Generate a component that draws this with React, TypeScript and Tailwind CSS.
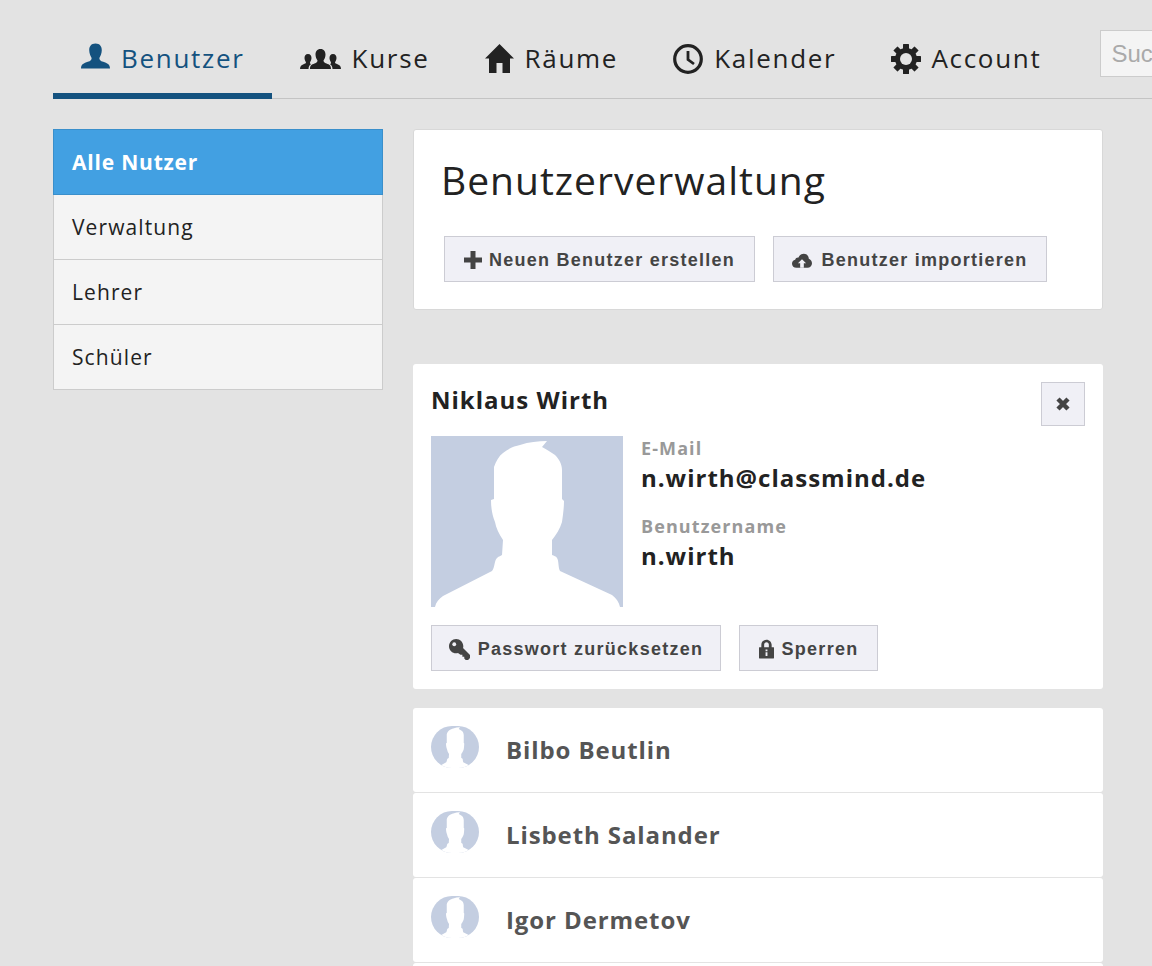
const SANS = "font-['Open_Sans',sans-serif]";

// Head-and-shoulders silhouette used for the big and the small avatars
function Avatar({ className }: { className: string }) {
  return (
    <svg viewBox="0 0 192 171" preserveAspectRatio="none" className={className} aria-hidden="true">
      <rect width="192" height="171" fill="#c4cee1" />
      <path
        fill="#fff"
        d="M4 171C5 166 8 163 12 160L61 135C64 131 63 125 66 122C68 120 70 120 71 119L72 104C68 98 65 92 64 86C61 79 60 71 60 64L63 63L63 31C65 25 68 20 72 17C78 12 84 10 89 9C98 6 107 5 116 5L111 11C116 14 120 16 124 19C128 23 131 28 131 34L131 63L133 65C133 72 132 79 131 86C129 93 125 99 121 104L121 119C123 120 125 120 126 122C128 125 127 131 129 135L181 159C185 162 188 166 189 171Z"
      />
    </svg>
  );
}

function UserIcon() {
  return (
    <svg viewBox="0 0 30 26" className="-mt-[5px] h-[26px] w-[29px]" fill="currentColor" aria-hidden="true">
      <path d="M15 0C19.5 0 21.5 3 21.5 7C21.5 10.5 20 13 19 15C19 17 20 18 23 19C27 20.5 30 21.5 30 26L0 26C0 21.5 3 20.5 7 19C10 18 11 17 11 15C10 13 8.5 10.5 8.5 7C8.5 3 10.5 0 15 0Z" />
    </svg>
  );
}

function GroupIcon() {
  return (
    <svg viewBox="0 0 41 20" className="h-[20px] w-[41px]" fill="currentColor" aria-hidden="true">
      <path d="M8 5C10.5 5 11.5 7 11.5 9C11.5 11 10.5 12 10 13.5C10 14.5 10.5 15 11 15.2C9.5 16.2 8.5 17.5 8.5 20L0 20C0 17 1.5 16 3.5 15.2C5 14.6 6 14.5 6 13.5C5.5 12 4.5 11 4.5 9C4.5 7 5.5 5 8 5Z" />
      <path d="M33 5C35.5 5 36.5 7 36.5 9C36.5 11 35.5 12 35 13.5C35 14.5 36 14.6 37.5 15.2C39.5 16 41 17 41 20L32.5 20C32.5 17.5 31.5 16.2 30 15.2C30.5 15 31 14.5 31 13.5C30.5 12 29.5 11 29.5 9C29.5 7 30.5 5 33 5Z" />
      <path d="M20.5 0C24 0 25.5 2.5 25.5 5.5C25.5 8 24.5 10 23.5 11.5C23.5 13 24.5 13.8 26.5 14.5C29.5 15.5 31 16.5 31 20L10 20C10 16.5 11.5 15.5 14.5 14.5C16.5 13.8 17.5 13 17.5 11.5C16.5 10 15.5 8 15.5 5.5C15.5 2.5 17 0 20.5 0Z" />
    </svg>
  );
}

function HomeIcon() {
  return (
    <svg viewBox="0 0 29 29" className="h-[29px] w-[29px]" fill="currentColor" aria-hidden="true">
      <path d="M14.5 0L29 14.5L25 14.5L25 29L17.5 29L17.5 19L11.5 19L11.5 29L4 29L4 14.5L0 14.5Z" />
    </svg>
  );
}

function ClockIcon() {
  return (
    <svg viewBox="0 0 30 30" className="h-[30px] w-[30px]" fill="none" stroke="currentColor" aria-hidden="true">
      <circle cx="15" cy="15" r="13.3" strokeWidth="3.2" />
      <path d="M15 7L15 15.5L21 20" strokeWidth="2.8" />
    </svg>
  );
}

function CogIcon() {
  return (
    <svg viewBox="0 0 30 30" className="-mr-px h-[30px] w-[30px]" aria-hidden="true">
      <g fill="currentColor">
        <circle cx="15" cy="15" r="11" />
        <rect x="12" y="0" width="6" height="30" rx="0.5" />
        <rect x="12" y="0" width="6" height="30" rx="0.5" transform="rotate(45 15 15)" />
        <rect x="12" y="0" width="6" height="30" rx="0.5" transform="rotate(90 15 15)" />
        <rect x="12" y="0" width="6" height="30" rx="0.5" transform="rotate(135 15 15)" />
      </g>
      <circle cx="15" cy="15" r="6" fill="#e3e3e3" />
    </svg>
  );
}

function PlusIcon() {
  return (
    <svg viewBox="0 0 18 18" className="h-[18px] w-[18px]" fill="currentColor" aria-hidden="true">
      <path d="M6.5 0H11.5V6.5H18V11.5H11.5V18H6.5V11.5H0V6.5H6.5Z" />
    </svg>
  );
}

function CloudIcon() {
  return (
    <svg viewBox="0 0 22 16" className="h-[15px] w-[20px]" aria-hidden="true">
      <path
        fill="currentColor"
        d="M5 16C2 16 0 14 0 11.5C0 9.3 1.5 7.7 3.5 7.3C4 5.5 5.5 4.5 7.2 4.8C8.3 2 10.5 0.5 13 0.5C16 0.5 18.3 2.8 18.5 6C20.5 6.8 22 8.8 22 11C22 14 19.8 16 17 16Z"
      />
      <path fill="#f0f0f6" d="M11 6.5L15.5 11H13V16H9V11H6.5Z" />
    </svg>
  );
}

function KeyIcon() {
  return (
    <svg viewBox="0 0 22 22" className="h-[21px] w-[21px]" aria-hidden="true">
      <path fill="currentColor" d="M7.5 0C11.6 0 15 3.4 15 7.5C15 8.2 14.9 8.8 14.7 9.4L22 16.7V20L20 22H17.5L16 20.5V18.5H14V16.5H12L9.4 14.7C8.8 14.9 8.2 15 7.5 15C3.4 15 0 11.6 0 7.5C0 3.4 3.4 0 7.5 0Z" />
      <circle cx="5.5" cy="5.5" r="2" fill="#f0f0f6" />
    </svg>
  );
}

function LockIcon() {
  return (
    <svg viewBox="0 0 16 20" className="h-[20px] w-[15px]" aria-hidden="true">
      <path fill="currentColor" fillRule="evenodd" d="M2.5 8V5.5C2.5 2.5 5 0 8 0C11 0 13.5 2.5 13.5 5.5V8H15.5C15.8 8 16 8.2 16 8.5V19.5C16 19.8 15.8 20 15.5 20H0.5C0.2 20 0 19.8 0 19.5V8.5C0 8.2 0.2 8 0.5 8ZM5.5 8H10.5V5.5C10.5 4 9.5 2.8 8 2.8C6.5 2.8 5.5 4 5.5 5.5Z" />
      <path fill="#f0f0f6" d="M7 10.5H9V12.5H7ZM7 13.5H9V17.5H7Z" />
    </svg>
  );
}

function CloseIcon() {
  return (
    <svg viewBox="0 0 14 14" className="h-[14px] w-[14px]" fill="none" stroke="currentColor" strokeWidth="4.5" aria-hidden="true">
      <path d="M2 2L12 12M12 2L2 12" />
    </svg>
  );
}

function Tab({ label, icon, active }: { label: string; icon: React.ReactNode; active?: boolean }) {
  return (
    <a
      className={`flex h-[99px] items-center gap-[11px] border-b-[6px] pl-[28px] pr-[27px] pt-[24px] text-[26px] tracking-[1.7px] ${
        active ? "border-[#14527f] text-[#14527f]" : "border-transparent text-[#222]"
      }`}
    >
      {icon}
      <span>{label}</span>
    </a>
  );
}

function ActionButton({ label, icon, width, gap }: { label: string; icon: React.ReactNode; width: string; gap: string }) {
  return (
    <button
      className={`flex h-[46px] items-center justify-center border border-[#ccccd4] bg-[#f0f0f6] pt-[2px] font-['Liberation_Sans',sans-serif] text-[18px] font-bold tracking-[1.25px] text-[#444] ${gap} ${width}`}
    >
      {icon}
      {label}
    </button>
  );
}

function SideItem({ label, active }: { label: string; active?: boolean }) {
  return (
    <div
      className={`flex items-center pl-[18px] pt-px text-[21px] ${
        active
          ? "-mx-px -mt-px h-[66px] border border-[#3a8fcb] bg-[#42a0e2] font-bold tracking-[0.8px] text-white"
          : "h-[65px] border-b border-[#ccc] tracking-[1.1px] text-[#222] last:h-[64px] last:border-b-0"
      }`}
    >
      {label}
    </div>
  );
}

function UserRow({ name }: { name: string }) {
  return (
    <div className="flex h-[84px] shrink-0 items-center rounded-[3px] bg-white pl-[18px]">
      <div className="mt-[18px] h-[42px] w-[48px] self-start overflow-hidden rounded-[24px]">
        <Avatar className="h-[46px] w-[48px]" />
      </div>
      <span className="ml-[27px] text-[24px] font-bold tracking-[0.9px] text-[#555]">{name}</span>
    </div>
  );
}

export default function App() {
  return (
    <div className={`h-[966px] w-[1152px] overflow-hidden bg-[#e3e3e3] ${SANS}`}>
      <nav className="ml-[53px] flex h-[99px] items-start border-b border-[#c4c4c4]">
        <Tab label="Benutzer" icon={<UserIcon />} active />
        <Tab label="Kurse" icon={<GroupIcon />} />
        <Tab label="Räume" icon={<HomeIcon />} />
        <Tab label="Kalender" icon={<ClockIcon />} />
        <Tab label="Account" icon={<CogIcon />} />
        <input
          placeholder="Suchen"
          className="ml-[32px] mt-[30px] h-[47px] w-[200px] shrink-0 border border-[#ccc] bg-[#f4f4f4] px-[10px] font-['Liberation_Sans',sans-serif] text-[24px] placeholder:text-[#aaa]"
        />
      </nav>

      <div className="ml-[53px] mt-[30px] flex items-start gap-[30px]">
        <aside className="w-[330px] shrink-0 border border-[#ccc] bg-[#f4f4f4]">
          <SideItem label="Alle Nutzer" active />
          <SideItem label="Verwaltung" />
          <SideItem label="Lehrer" />
          <SideItem label="Schüler" />
        </aside>

        <main className="flex w-[690px] shrink-0 flex-col">
          <section className="h-[181px] rounded-[3px] border border-[#d8d8d8] bg-white pl-[27px] pt-[20px]">
            <h1 className="text-[39px] leading-[60px] tracking-[1px] text-[#222]">Benutzerverwaltung</h1>
            <div className="ml-[3px] mt-[26px] flex gap-[18px]">
              <ActionButton label="Neuen Benutzer erstellen" icon={<PlusIcon />} width="w-[311px]" gap="gap-[7px]" />
              <ActionButton label="Benutzer importieren" icon={<CloudIcon />} width="w-[274px]" gap="gap-[9px]" />
            </div>
          </section>

          <section className="mt-[54px] h-[325px] rounded-[3px] bg-white p-[18px]">
            <div className="flex h-[54px] items-start justify-between">
              <h2 className="text-[24px] font-bold leading-[36px] tracking-[1px] text-[#222]">Niklaus Wirth</h2>
              <button className="flex h-[44px] w-[44px] items-center justify-center border border-[#ccccd4] bg-[#f0f0f6] text-[#444]">
                <CloseIcon />
              </button>
            </div>
            <div className="flex gap-[18px]">
              <Avatar className="h-[171px] w-[192px] shrink-0" />
              <div className="-mt-px">
                <div className="text-[18px] font-bold leading-[26px] tracking-[1.1px] text-[#999]">E-Mail</div>
                <div className="text-[24px] font-bold leading-[34px] tracking-[1px] text-[#222]">n.wirth@classmind.de</div>
                <div className="mt-[18px] text-[18px] font-bold leading-[26px] tracking-[1.1px] text-[#999]">Benutzername</div>
                <div className="text-[24px] font-bold leading-[34px] tracking-[1px] text-[#222]">n.wirth</div>
              </div>
            </div>
            <div className="mt-[18px] flex gap-[18px]">
              <ActionButton label="Passwort zurücksetzen" icon={<KeyIcon />} width="w-[290px]" gap="gap-[8px]" />
              <ActionButton label="Sperren" icon={<LockIcon />} width="w-[139px]" gap="gap-[8px]" />
            </div>
          </section>

          <div className="mt-[19px] flex flex-col gap-px">
            <UserRow name="Bilbo Beutlin" />
            <UserRow name="Lisbeth Salander" />
            <UserRow name="Igor Dermetov" />
            <UserRow name="" />
          </div>
        </main>
      </div>
    </div>
  );
}
